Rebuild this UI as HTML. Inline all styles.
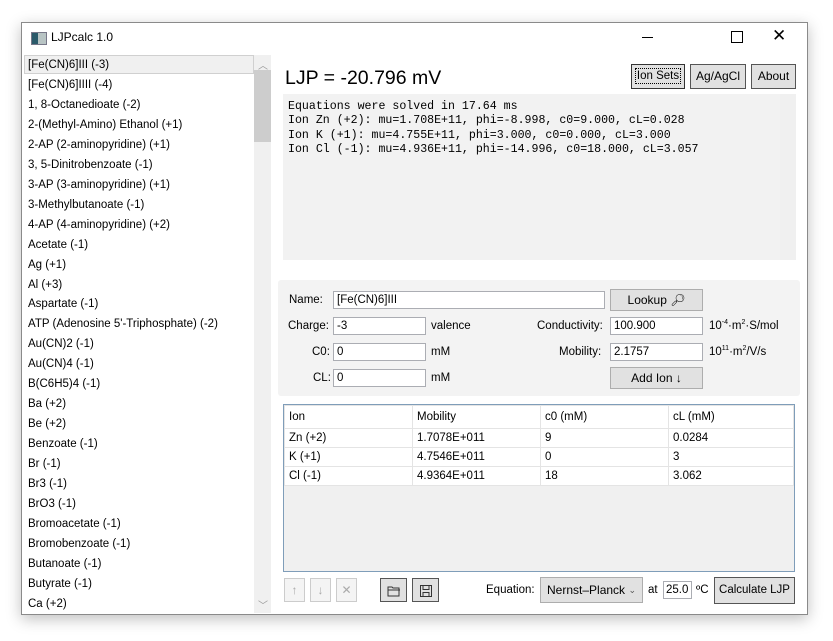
<!DOCTYPE html>
<html><head><style>
body{margin:0;width:833px;height:641px;background:#fff;position:relative;overflow:hidden;font-family:"Liberation Sans",sans-serif;font-size:11.5px;color:#000}
.a{position:absolute}
.win{left:21px;top:22px;width:785px;height:591px;border:1px solid #8a8a8a;background:#fff;box-shadow:0 4px 14px rgba(0,0,0,.25)}
.li{position:absolute;left:24px;width:228px;height:20px;line-height:20px;padding-left:4px;white-space:nowrap}
.btn{position:absolute;background:#e1e1e1;border:1px solid #adadad;text-align:center;box-sizing:border-box;font-size:12px}
.tb{position:absolute;background:#fff;border:1px solid #abadb3;box-sizing:border-box;padding-left:3px;line-height:16px;height:18px}
.lbl{position:absolute;line-height:18px}
sup{font-size:7px;line-height:0;vertical-align:5px}
.mono{font-family:"Liberation Mono",monospace;font-size:11.6px;line-height:14.3px;white-space:pre}
table{border-collapse:collapse}
td{border:1px solid #e4e4e4;height:18px;padding:0 4px;font-size:11.5px}
</style></head><body>
<div class="a win"></div>
<div class="a" style="left:31px;top:32px;width:14px;height:11px;background:#b8c4c4;border:1px solid #778"><div style="width:6px;height:11px;background:#2a5a6a"></div></div>
<div class="a" style="left:51px;top:30px;font-size:12px">LJPcalc 1.0</div>
<div class="a" style="left:642px;top:37px;width:11px;border-top:1px solid #000"></div>
<div class="a" style="left:731px;top:31px;width:10px;height:10px;border:1px solid #000"></div>
<div class="a" style="left:772px;top:26px;font-size:17px;line-height:20px">✕</div>
<div class="a" style="left:24px;top:55px;width:230px;height:19px;background:#f0f0f0;border:1px solid #d0d0d0;box-sizing:border-box"></div>
<div class="a" style="left:254px;top:55px;width:17px;height:558px;background:#f0f0f0"></div>
<div class="a" style="left:254px;top:70px;width:17px;height:72px;background:#cdcdcd"></div>
<div class="a" style="left:258px;top:57px;color:#999;font-size:10px">︿</div>
<div class="a" style="left:258px;top:597px;color:#999;font-size:10px">﹀</div>
<div class="li" style="top:55px">[Fe(CN)6]III (-3)</div>
<div class="li" style="top:75px">[Fe(CN)6]IIII (-4)</div>
<div class="li" style="top:95px">1, 8-Octanedioate (-2)</div>
<div class="li" style="top:115px">2-(Methyl-Amino) Ethanol (+1)</div>
<div class="li" style="top:135px">2-AP (2-aminopyridine) (+1)</div>
<div class="li" style="top:155px">3, 5-Dinitrobenzoate (-1)</div>
<div class="li" style="top:175px">3-AP (3-aminopyridine) (+1)</div>
<div class="li" style="top:195px">3-Methylbutanoate (-1)</div>
<div class="li" style="top:215px">4-AP (4-aminopyridine) (+2)</div>
<div class="li" style="top:235px">Acetate (-1)</div>
<div class="li" style="top:255px">Ag (+1)</div>
<div class="li" style="top:275px">Al (+3)</div>
<div class="li" style="top:294px">Aspartate (-1)</div>
<div class="li" style="top:314px">ATP (Adenosine 5'-Triphosphate) (-2)</div>
<div class="li" style="top:334px">Au(CN)2 (-1)</div>
<div class="li" style="top:354px">Au(CN)4 (-1)</div>
<div class="li" style="top:374px">B(C6H5)4 (-1)</div>
<div class="li" style="top:394px">Ba (+2)</div>
<div class="li" style="top:414px">Be (+2)</div>
<div class="li" style="top:434px">Benzoate (-1)</div>
<div class="li" style="top:454px">Br (-1)</div>
<div class="li" style="top:474px">Br3 (-1)</div>
<div class="li" style="top:494px">BrO3 (-1)</div>
<div class="li" style="top:514px">Bromoacetate (-1)</div>
<div class="li" style="top:534px">Bromobenzoate (-1)</div>
<div class="li" style="top:554px">Butanoate (-1)</div>
<div class="li" style="top:574px">Butyrate (-1)</div>
<div class="li" style="top:594px">Ca (+2)</div>

<div class="a" style="left:285px;top:65px;font-size:19.5px;line-height:26px">LJP = -20.796 mV</div>
<div class="btn" style="left:631px;top:64px;width:54px;height:25px;line-height:23px;border-color:#333;font-size:11.5px"><span style="outline:1px dotted #000;outline-offset:1px">Ion Sets</span></div>
<div class="btn" style="left:690px;top:64px;width:56px;height:25px;line-height:23px;border-color:#555">Ag/AgCl</div>
<div class="btn" style="left:751px;top:64px;width:45px;height:25px;line-height:23px;border-color:#555">About</div>

<div class="a" style="left:283px;top:94px;width:513px;height:166px;background:#f2f2f2"></div>
<div class="a" style="left:780px;top:94px;width:16px;height:166px;background:#f0f0f0"></div>
<div class="a mono" style="left:288px;top:100px">Equations were solved in 17.64 ms
Ion Zn (+2): mu=1.708E+11, phi=-8.998, c0=9.000, cL=0.028
Ion K (+1): mu=4.755E+11, phi=3.000, c0=0.000, cL=3.000
Ion Cl (-1): mu=4.936E+11, phi=-14.996, c0=18.000, cL=3.057</div>

<div class="a" style="left:278px;top:280px;width:522px;height:116px;background:#f3f3f3;border-radius:3px"></div>
<div class="lbl" style="left:289px;top:291px">Name:</div>
<div class="tb" style="left:333px;top:291px;width:272px">[Fe(CN)6]III</div>
<div class="btn" style="left:610px;top:289px;width:93px;height:22px;line-height:20px">Lookup &#x1F50E;&#xFE0E;</div>
<div class="lbl" style="left:288px;top:317px">Charge:</div>
<div class="tb" style="left:333px;top:317px;width:93px">-3</div>
<div class="lbl" style="left:431px;top:317px">valence</div>
<div class="lbl" style="left:537px;top:317px">Conductivity:</div>
<div class="tb" style="left:610px;top:317px;width:93px">100.900</div>
<div class="lbl" style="left:709px;top:317px">10<sup>-4</sup>·m<sup>2</sup>·S/mol</div>
<div class="lbl" style="left:312px;top:343px">C0:</div>
<div class="tb" style="left:333px;top:343px;width:93px">0</div>
<div class="lbl" style="left:431px;top:343px">mM</div>
<div class="lbl" style="left:559px;top:343px">Mobility:</div>
<div class="tb" style="left:610px;top:343px;width:93px">2.1757</div>
<div class="lbl" style="left:709px;top:343px">10<sup>11</sup>·m<sup>2</sup>/V/s</div>
<div class="lbl" style="left:313px;top:369px">CL:</div>
<div class="tb" style="left:333px;top:369px;width:93px">0</div>
<div class="lbl" style="left:431px;top:369px">mM</div>
<div class="btn" style="left:610px;top:367px;width:93px;height:22px;line-height:20px">Add Ion ↓</div>

<div class="a" style="left:283px;top:404px;width:512px;height:168px;border:1px solid #7f9db9;box-sizing:border-box;background:#f0f0f0"></div>
<table class="a" style="left:284px;top:405px;width:510px;background:#fff">
<tr><td style="width:119px;height:22px">Ion</td><td style="width:119px">Mobility</td><td style="width:119px">c0 (mM)</td><td>cL (mM)</td></tr>
<tr><td>Zn (+2)</td><td>1.7078E+011</td><td>9</td><td>0.0284</td></tr>
<tr><td>K (+1)</td><td>4.7546E+011</td><td>0</td><td>3</td></tr>
<tr><td>Cl (-1)</td><td>4.9364E+011</td><td>18</td><td>3.062</td></tr>
</table>

<div class="btn" style="left:284px;top:578px;width:21px;height:24px;line-height:22px;color:#aaa;background:#f4f4f4;border-color:#ccc">↑</div>
<div class="btn" style="left:310px;top:578px;width:21px;height:24px;line-height:22px;color:#aaa;background:#f4f4f4;border-color:#ccc">↓</div>
<div class="btn" style="left:336px;top:578px;width:21px;height:24px;line-height:22px;color:#aaa;background:#f4f4f4;border-color:#ccc">✕</div>
<div class="btn" style="left:380px;top:578px;width:27px;height:24px;border-color:#555"><svg width="14" height="12" style="margin-top:6px" viewBox="0 0 14 12"><path d="M1 2h4l1 1h6v8H1z M1 5h12" fill="none" stroke="#333"/></svg></div>
<div class="btn" style="left:412px;top:578px;width:27px;height:24px;border-color:#555"><svg width="12" height="12" style="margin-top:6px" viewBox="0 0 12 12"><path d="M.5 .5h11v11H.5z M3 .5v4h6v-4 M3 11.5v-4h6v4" fill="none" stroke="#333"/></svg></div>
<div class="lbl" style="left:486px;top:581px">Equation:</div>
<div class="btn" style="left:540px;top:577px;width:103px;height:26px;line-height:24px;text-align:left;padding-left:6px">Nernst–Planck <span style="position:absolute;right:6px;font-size:9px;color:#555">⌄</span></div>
<div class="lbl" style="left:648px;top:581px">at</div>
<div class="tb" style="left:663px;top:581px;width:29px;padding-left:2px">25.0</div>
<div class="lbl" style="left:696px;top:581px">ºC</div>
<div class="btn" style="left:714px;top:577px;width:81px;height:27px;line-height:25px;border-color:#555;font-size:11.5px">Calculate LJP</div>
</body></html>
